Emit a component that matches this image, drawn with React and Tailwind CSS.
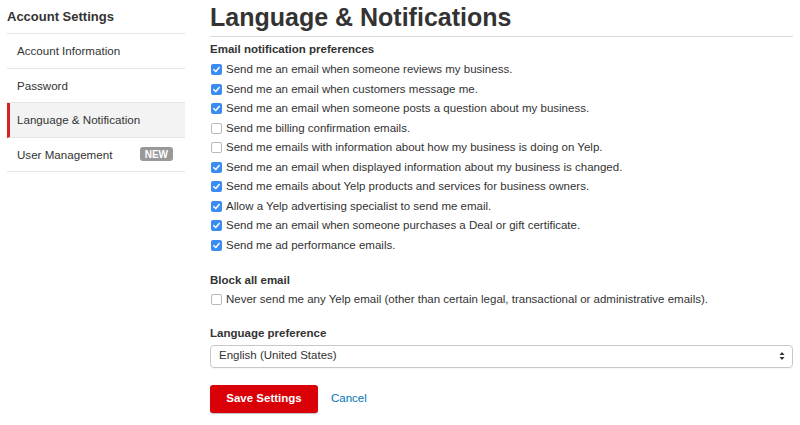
import React from "react";

const emailPrefs = [
    { label: "Send me an email when someone reviews my business.", checked: true },
    { label: "Send me an email when customers message me.", checked: true },
    { label: "Send me an email when someone posts a question about my business.", checked: true },
    { label: "Send me billing confirmation emails.", checked: false },
    { label: "Send me emails with information about how my business is doing on Yelp.", checked: false },
    { label: "Send me an email when displayed information about my business is changed.", checked: true },
    { label: "Send me emails about Yelp products and services for business owners.", checked: true },
    { label: "Allow a Yelp advertising specialist to send me email.", checked: true },
    { label: "Send me an email when someone purchases a Deal or gift certificate.", checked: true },
    { label: "Send me ad performance emails.", checked: true },
];

const navItems = [
    { label: "Account Information" },
    { label: "Password" },
    { label: "Language & Notification", active: true },
    { label: "User Management", badge: "NEW" },
];

const Box = ({ checked }) => (
    checked ? (
        <span className="w-[11px] h-[11px] rounded-[2px] bg-[#3b8cf2] flex items-center justify-center shrink-0">
            <svg width="9" height="9" viewBox="0 0 10 10">
                <path d="M2 5.2 L4.2 7.3 L8 2.8" fill="none" stroke="white" strokeWidth="1.7" strokeLinecap="round" strokeLinejoin="round" />
            </svg>
        </span>
    ) : (
        <span className="w-[11px] h-[11px] rounded-[2px] border border-[#b9b9b9] bg-white shrink-0" />
    )
);

const CheckRow = ({ label, checked }) => (
    <label className="flex items-center gap-[4px] h-[19.5px] pl-[1px]">
        <Box checked={checked} />
        <span>{label}</span>
    </label>
);

const Sidebar = () => (
    <aside className="w-[178px] shrink-0">
        <h2 className="text-[13px] font-bold text-[#333] h-[34px] flex items-center border-b border-[#e6e6e6]">
            Account Settings
        </h2>
        {navItems.map((item) => (
            <div
                key={item.label}
                className={`h-[34.5px] flex items-center justify-between border-b border-[#e6e6e6] text-[11.6px] text-[#333] pr-[12px] ${item.active ? "bg-[#f3f3f3] border-l-[3px] border-l-[#d32323] pl-[7px]" : "pl-[10px]"}`}
            >
                <span>{item.label}</span>
                {item.badge && (
                    <span className="bg-[#999] text-white text-[10px] font-bold rounded-[3px] px-[5px] h-[14px] flex items-center">
                        {item.badge}
                    </span>
                )}
            </div>
        ))}
    </aside>
);

export default function App() {
    return (
        <div className="w-[800px] h-[425px] bg-white flex gap-[25px] pl-[7px] pr-[7px] text-[#333] overflow-hidden" style={{ fontFamily: '"Liberation Sans", Arial, sans-serif' }}>
            <Sidebar />
            <main className="flex-1 text-[11.5px]">
                <h1 className="text-[25px] font-bold leading-none pt-[5px] pb-[6px] border-b border-[#d9d9d9]">
                    Language & Notifications
                </h1>
                <h3 className="font-bold mt-[6px] h-[14px] flex items-center">Email notification preferences</h3>
                <div className="mt-[3px]">
                    {emailPrefs.map((p) => (
                        <CheckRow key={p.label} {...p} />
                    ))}
                </div>
                <h3 className="font-bold mt-[19px] h-[14px] flex items-center">Block all email</h3>
                <div className="mt-[2px]">
                    <CheckRow label="Never send me any Yelp email (other than certain legal, transactional or administrative emails)." checked={false} />
                </div>
                <h3 className="font-bold mt-[17px] h-[14px] flex items-center">Language preference</h3>
                <div className="mt-[4px] h-[23px] border border-[#c8c8c8] rounded-[4px] flex items-center justify-between pl-[8px] pr-[7px] shadow-[0_1px_1px_rgba(0,0,0,0.04)]">
                    <span>English (United States)</span>
                    <svg width="6" height="10" viewBox="0 0 6 10">
                        <path d="M3 1 L5.5 4 L0.5 4 Z" fill="#333" />
                        <path d="M3 9 L5.5 6 L0.5 6 Z" fill="#333" />
                    </svg>
                </div>
                <div className="mt-[17px] flex items-center gap-[13px]">
                    <button className="h-[28px] w-[108px] rounded-[3px] bg-[#d90007] text-white font-bold text-[11.5px] shadow-[0_1px_1px_rgba(0,0,0,0.25)]">
                        Save Settings
                    </button>
                    <a className="text-[#0073bb] text-[11.5px]">Cancel</a>
                </div>
            </main>
        </div>
    );
}
